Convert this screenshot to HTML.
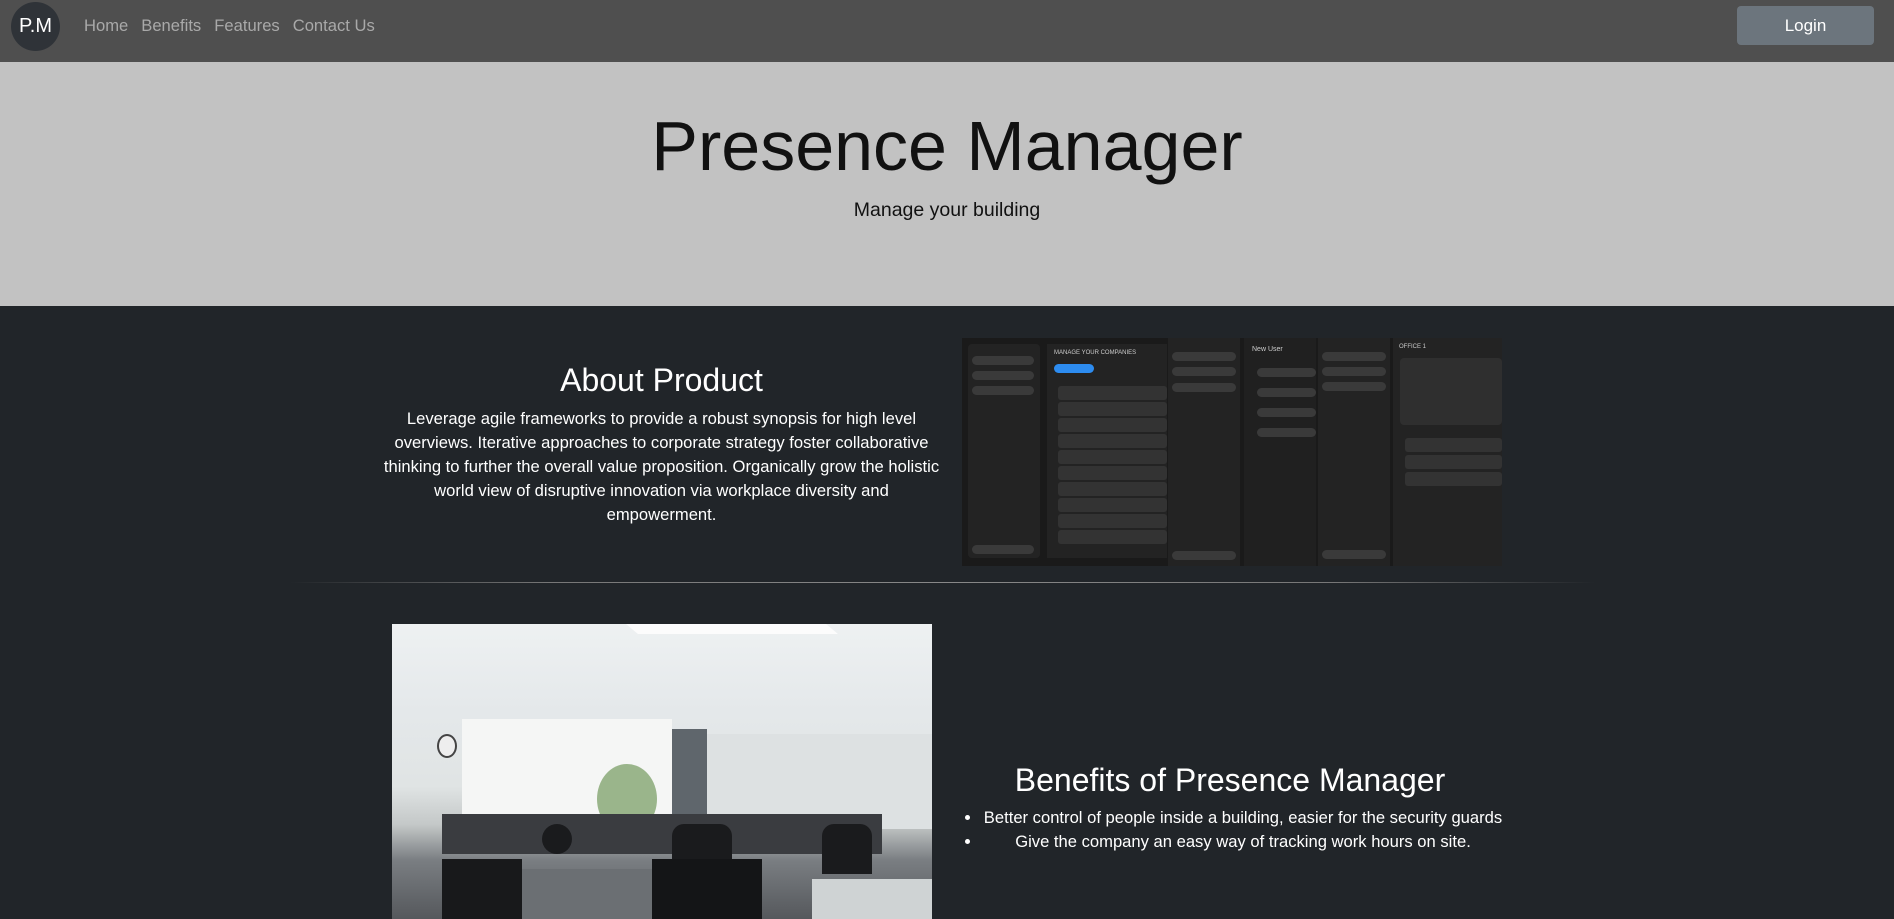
<!DOCTYPE html>
<html><head><style>
*{margin:0;padding:0;box-sizing:border-box}
body{width:1894px;height:919px;overflow:hidden;background:#212529;font-family:"Liberation Sans",Arial,sans-serif;position:relative}
.nav{position:absolute;left:0;top:0;width:1894px;height:62px;background:#4f4f4f}
.logo{position:absolute;left:11px;top:2px;width:49px;height:49px;border-radius:50%;background:#2f3338;color:#fff;font-size:20px;line-height:49px;text-align:center}
.links{position:absolute;left:84px;top:16px;font-size:16.6px;color:#a9a9a9}
.links span{margin-right:13px}
.login{position:absolute;left:1737px;top:6px;width:137px;height:39px;background:#6c757d;border-radius:4px;color:#fff;font-size:17px;text-align:center;line-height:39px}
.hero{position:absolute;left:0;top:62px;width:1894px;height:244px;background:#c2c2c2;text-align:center;color:#111}
.hero h1{font-weight:normal;font-size:70px;position:absolute;width:100%;top:44px}
.hero p{position:absolute;width:100%;top:137px;font-size:19.5px}
.about{position:absolute;left:380px;width:563px;text-align:center;color:#fff}
.about h2{position:absolute;width:100%;top:362px;font-weight:normal;font-size:32px}
.about p{position:absolute;width:100%;top:407px;font-size:16.6px;line-height:24px}
.shot{position:absolute;left:962px;top:338px;width:540px;height:228px;background:#1a1a1a;overflow:hidden}
.col{position:absolute;top:0;bottom:0;background:#232323}
.pill{position:absolute;height:9px;border-radius:5px;background:#3a3a3a}
.row{position:absolute;height:14px;border-radius:3px;background:#333}
hr{position:absolute;left:290px;top:582px;width:1305px;border:0;height:1px;background:linear-gradient(90deg,transparent,#777 20%,#888 50%,#777 80%,transparent)}
.photo{position:absolute;left:392px;top:624px;width:540px;height:295px;background:linear-gradient(180deg,#eef1f2 0%,#e4e8ea 30%,#e0e4e4 55%,#c4c8c8 68%,#7a7e82 80%,#55585c 100%);overflow:hidden}
.ben{position:absolute;left:940px;width:580px;color:#fff;text-align:center}
.ben h2{position:absolute;width:100%;top:762px;font-weight:normal;font-size:32px}
.ben ul{position:absolute;left:42px;width:522px;padding:0;top:806px;font-size:16.6px;line-height:24px;list-style-position:outside;white-space:nowrap}
</style></head><body>
<div class="nav"><div class="logo">P.M</div>
<div class="links"><span>Home</span><span>Benefits</span><span>Features</span><span>Contact Us</span></div>
<div class="login">Login</div></div>
<div class="hero"><h1>Presence Manager</h1><p>Manage your building</p></div>
<div class="about"><h2>About Product</h2><p>Leverage agile frameworks to provide a robust synopsis for high level overviews. Iterative approaches to corporate strategy foster collaborative thinking to further the overall value proposition. Organically grow the holistic world view of disruptive innovation via workplace diversity and empowerment.</p></div>
<div class="shot">
<div class="col" style="left:6px;width:72px;top:6px;bottom:8px;border-radius:4px"></div>
<div class="pill" style="left:10px;top:18px;width:62px"></div><div class="pill" style="left:10px;top:33px;width:62px"></div><div class="pill" style="left:10px;top:48px;width:62px"></div><div class="pill" style="left:10px;top:207px;width:62px"></div>
<div class="col" style="left:85px;width:120px;top:6px;bottom:8px"></div>
<div style="position:absolute;left:92px;top:12px;font-size:6px;color:#ccc">MANAGE YOUR COMPANIES</div>
<div class="pill" style="left:92px;top:26px;width:40px;background:#2d8cf0"></div>
<div class="row" style="left:96px;top:48px;width:109px"></div><div class="row" style="left:96px;top:64px;width:109px"></div><div class="row" style="left:96px;top:80px;width:109px"></div><div class="row" style="left:96px;top:96px;width:109px"></div><div class="row" style="left:96px;top:112px;width:109px"></div><div class="row" style="left:96px;top:128px;width:109px"></div><div class="row" style="left:96px;top:144px;width:109px"></div><div class="row" style="left:96px;top:160px;width:109px"></div><div class="row" style="left:96px;top:176px;width:109px"></div><div class="row" style="left:96px;top:192px;width:109px"></div>
<div class="col" style="left:206px;width:72px"></div>
<div class="pill" style="left:210px;top:14px;width:64px"></div><div class="pill" style="left:210px;top:29px;width:64px"></div><div class="pill" style="left:210px;top:45px;width:64px"></div><div class="pill" style="left:210px;top:213px;width:64px"></div>
<div class="col" style="left:282px;width:72px;background:#202020"></div>
<div style="position:absolute;left:290px;top:8px;font-size:7px;color:#ccc">New User</div>
<div class="pill" style="left:295px;top:30px;width:59px"></div><div class="pill" style="left:295px;top:50px;width:59px"></div><div class="pill" style="left:295px;top:70px;width:59px"></div><div class="pill" style="left:295px;top:90px;width:59px"></div>
<div class="col" style="left:356px;width:72px"></div>
<div class="pill" style="left:360px;top:14px;width:64px"></div><div class="pill" style="left:360px;top:29px;width:64px"></div><div class="pill" style="left:360px;top:44px;width:64px"></div><div class="pill" style="left:360px;top:212px;width:64px"></div>
<div class="col" style="left:431px;width:109px"></div>
<div style="position:absolute;left:437px;top:6px;font-size:6px;color:#ccc">OFFICE 1</div>
<div style="position:absolute;left:438px;top:20px;width:102px;height:67px;background:#2f2f2f;border-radius:4px"></div>
<div class="row" style="left:443px;top:100px;width:97px"></div><div class="row" style="left:443px;top:117px;width:97px"></div><div class="row" style="left:443px;top:134px;width:97px"></div>
</div>
<hr>
<div class="photo">
<div style="position:absolute;left:240px;top:0;width:200px;height:10px;background:#fff;transform:skewX(50deg);opacity:.8"></div>
<div style="position:absolute;left:45px;top:110px;width:20px;height:24px;border-radius:50%;background:#eee;border:2px solid #444"></div>
<div style="position:absolute;left:70px;top:95px;width:210px;height:110px;background:#f5f6f5"></div>
<div style="position:absolute;left:280px;top:105px;width:35px;height:110px;background:#5f666c"></div>
<div style="position:absolute;left:315px;top:110px;width:225px;height:95px;background:#dde1e2"></div>
<div style="position:absolute;left:205px;top:140px;width:60px;height:70px;border-radius:50%;background:#5e8a44;opacity:.6"></div>
<div style="position:absolute;left:50px;top:190px;width:440px;height:40px;background:#3a3c40"></div>
<div style="position:absolute;left:150px;top:200px;width:30px;height:30px;border-radius:50%;background:#1a1b1d"></div>
<div style="position:absolute;left:280px;top:200px;width:60px;height:40px;border-radius:12px 12px 0 0;background:#1a1b1d"></div>
<div style="position:absolute;left:430px;top:200px;width:50px;height:50px;border-radius:12px 12px 0 0;background:#1a1b1d"></div>
<div style="position:absolute;left:50px;top:235px;width:80px;height:60px;background:#18191b"></div>
<div style="position:absolute;left:260px;top:235px;width:110px;height:60px;background:#141517"></div>
<div style="position:absolute;left:130px;top:245px;width:130px;height:50px;background:#6b6f73"></div>
<div style="position:absolute;left:420px;top:255px;width:120px;height:40px;background:#cfd3d4"></div>
</div>
<div class="ben"><h2>Benefits of Presence Manager</h2><ul><li>Better control of people inside a building, easier for the security guards</li><li>Give the company an easy way of tracking work hours on site.</li></ul></div>
</body></html>
